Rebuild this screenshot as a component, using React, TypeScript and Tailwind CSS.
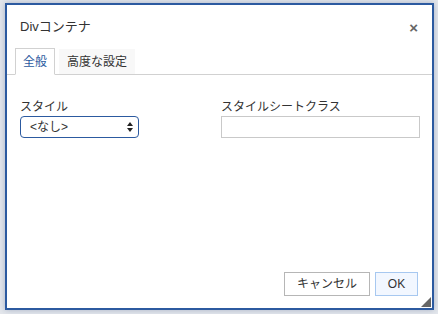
import React from 'react';

export default function App() {
  return (
    <div
      className="w-[438px] h-[314px] bg-[#e4e7ec] pl-[5px] pt-[3px] text-[#333]"
      style={{ fontFamily: '"Liberation Sans", "Noto Sans CJK JP", sans-serif' }}
    >
      <div className="relative flex h-[307px] w-[429px] flex-col border-2 border-[#2c5aa0] bg-white shadow-[0_0_6px_rgba(90,110,150,0.45)]">
        {/* title bar */}
        <div className="flex h-[42px] items-center justify-between pl-[13px] pr-[14px] pt-[2px]">
          <span className="text-[13px]">Divコンテナ</span>
          <span className="text-[15px] font-bold leading-none text-[#666]">×</span>
        </div>

        {/* tabs */}
        <div className="flex h-[28px] items-end gap-[4px] border-b border-[#d1d1d1] pl-[8px]">
          <div className="-mb-px flex h-[27px] items-center border border-b-white border-[#d1d1d1] bg-white px-[7px] text-[12px] text-[#2c5aa0]">
            全般
          </div>
          <div className="flex h-[25px] items-center bg-[#f8f8f8] px-[8px] text-[12px]">
            高度な設定
          </div>
        </div>

        {/* content */}
        <div className="flex gap-[82px] pl-[13px] pt-[24px]">
          <div className="flex flex-col">
            <label className="text-[12px] leading-[16px]">スタイル</label>
            <div className="mt-[1px] flex h-[22px] w-[119px] items-center justify-between rounded-[4px] border border-[#2c5aa0] pl-[9px] pr-[5px] text-[12px]">
              <span>&lt;なし&gt;</span>
              <svg width="6" height="10" viewBox="0 0 6 10">
                <path d="M3 0 L6 4 H0 Z M0 6 H6 L3 10 Z" fill="#222" />
              </svg>
            </div>
          </div>
          <div className="flex flex-col">
            <label className="text-[12px] leading-[16px]">スタイルシートクラス</label>
            <div className="mt-[1px] h-[22px] w-[199px] border border-[#c9c9c9]" />
          </div>
        </div>

        {/* buttons */}
        <div className="mt-auto flex justify-end gap-[5px] pb-[12px] pr-[14px]">
          <button className="h-[24px] w-[86px] border border-[#b6b6b6] bg-white text-[12px] text-[#333]">
            キャンセル
          </button>
          <button className="h-[24px] w-[43px] border border-[#a7c8f0] bg-[#f2f7ff] text-[12px] text-[#333]">
            OK
          </button>
        </div>

        <svg className="absolute bottom-[1px] right-[1px]" width="10" height="10" viewBox="0 0 10 10">
          <path d="M10 0 V10 H0 Z" fill="#666" />
        </svg>
      </div>
    </div>
  );
}
